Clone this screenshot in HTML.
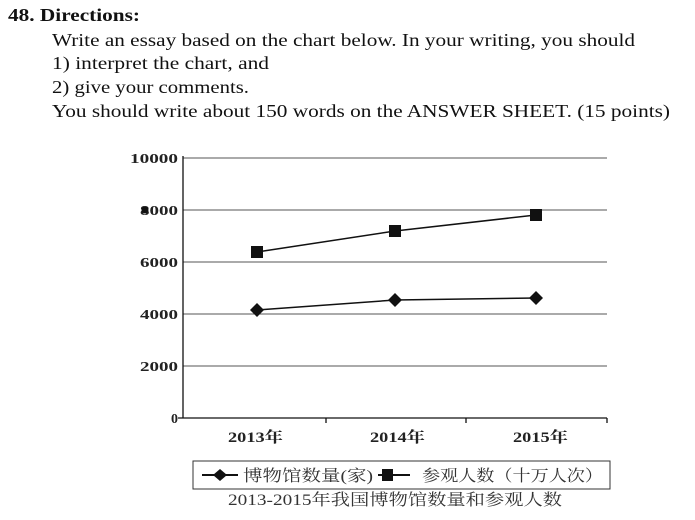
<html><head><style>body{margin:0;background:#fff;width:695px;height:520px;overflow:hidden}</style></head><body>
<svg width="695" height="520" style="position:absolute;left:0;top:0" font-family="Liberation Serif,Noto Serif CJK SC,serif">
<g fill="#111" font-size="17.5" lengthAdjust="spacingAndGlyphs">
<text x="8" y="21" font-weight="bold" textLength="132" lengthAdjust="spacingAndGlyphs">48. Directions:</text>
<text x="52" y="46" textLength="583" lengthAdjust="spacingAndGlyphs">Write an essay based on the chart below. In your writing, you should</text>
<text x="52" y="69" textLength="217" lengthAdjust="spacingAndGlyphs">1) interpret the chart, and</text>
<text x="52" y="93" textLength="197" lengthAdjust="spacingAndGlyphs">2) give your comments.</text>
<text x="52" y="117" textLength="618" lengthAdjust="spacingAndGlyphs">You should write about 150 words on the ANSWER SHEET. (15 points)</text>
</g>
<g stroke="#555" stroke-width="1">
<line x1="183" y1="158" x2="607" y2="158"/><line x1="183" y1="210" x2="607" y2="210"/><line x1="183" y1="262" x2="607" y2="262"/><line x1="183" y1="314" x2="607" y2="314"/><line x1="183" y1="366" x2="607" y2="366"/>
</g>
<g stroke="#111" stroke-width="1.3"><line x1="183" y1="156" x2="183" y2="418"/><line x1="178" y1="418" x2="607" y2="418"/>
<line x1="326" y1="418" x2="326" y2="423"/><line x1="466" y1="418" x2="466" y2="423"/><line x1="607" y1="418" x2="607" y2="423"/></g>
<g font-size="14" text-anchor="end" fill="#222" font-weight="bold"><text x="178" y="163" textLength="48" lengthAdjust="spacingAndGlyphs">10000</text><text x="178" y="215" textLength="38" lengthAdjust="spacingAndGlyphs">8000</text><text x="178" y="267" textLength="38" lengthAdjust="spacingAndGlyphs">6000</text><text x="178" y="319" textLength="38" lengthAdjust="spacingAndGlyphs">4000</text><text x="178" y="371" textLength="38" lengthAdjust="spacingAndGlyphs">2000</text><text x="178" y="423">0</text></g>
<circle cx="145" cy="210" r="3.5" fill="#111"/>
<polyline points="257,252 395,231 536,215" fill="none" stroke="#111" stroke-width="1.5"/>
<polyline points="257,310 395,300 536,298" fill="none" stroke="#111" stroke-width="1.5"/>
<g fill="#111"><rect x="251" y="246" width="12" height="12"/><rect x="389" y="225" width="12" height="12"/><rect x="530" y="209" width="12" height="12"/>
<path d="M257 303l7 7-7 7-7-7z"/><path d="M395 293l7 7-7 7-7-7z"/><path d="M536 291l7 7-7 7-7-7z"/></g>
<g font-size="15" fill="#222" font-weight="bold"><text x="228" y="442" textLength="55" lengthAdjust="spacingAndGlyphs">2013年</text><text x="370" y="442" textLength="55" lengthAdjust="spacingAndGlyphs">2014年</text><text x="513" y="442" textLength="55" lengthAdjust="spacingAndGlyphs">2015年</text></g>
<rect x="193" y="461" width="417" height="28" fill="none" stroke="#333"/>
<line x1="202" y1="475" x2="238" y2="475" stroke="#111" stroke-width="2"/><path d="M220 469l7 6-7 6-7-6z" fill="#111"/>
<line x1="378" y1="475" x2="410" y2="475" stroke="#111" stroke-width="2"/><rect x="382" y="469" width="11" height="12" fill="#111"/>
<g font-size="16" fill="#333"><text x="243" y="481" textLength="130" lengthAdjust="spacingAndGlyphs">博物馆数量(家)</text><text x="422" y="481" textLength="181" lengthAdjust="spacingAndGlyphs">参观人数（十万人次）</text>
<text x="228" y="505" textLength="334" lengthAdjust="spacingAndGlyphs">2013-2015年我国博物馆数量和参观人数</text></g>
</svg>
</body></html>
